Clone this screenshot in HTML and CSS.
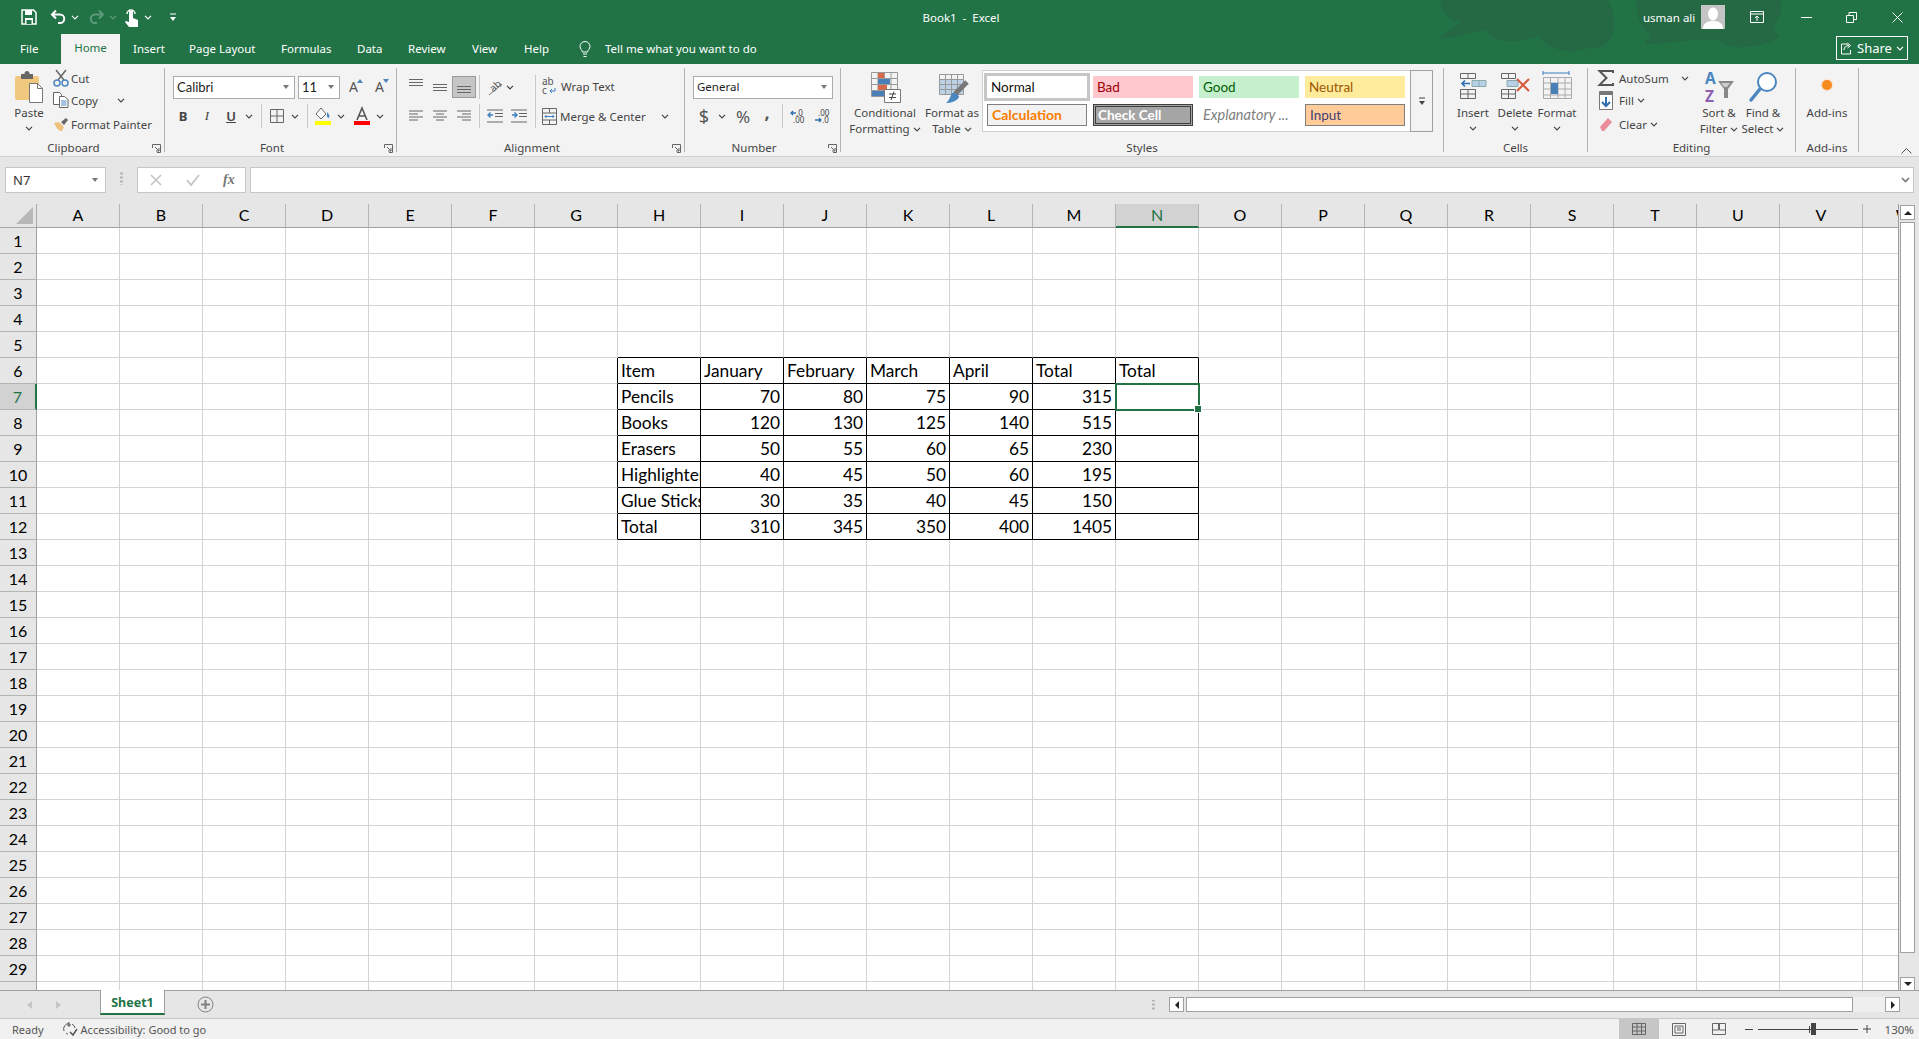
FILE: index.html
```html
<!DOCTYPE html>
<html lang="en">
<head>
    <meta charset="UTF-8">
    <meta name="viewport" content="width=device-width, initial-scale=1.0">
    <title>Book1 - Excel</title>
    <link rel="stylesheet" href="styles.css">
</head>
<body>
    <svg class="symbols">
        <symbol id="chev" viewBox="0 0 8 5"><path d="M1 .8l3 3 3-3" fill="none" stroke="#444" stroke-width="1.2"/></symbol>
        <symbol id="chev-w" viewBox="0 0 8 5"><path d="M1 .8l3 3 3-3" fill="none" stroke="#fff" stroke-width="1.2"/></symbol>
        <symbol id="launcher" viewBox="0 0 9 9"><path d="M.5 4V.5H8.500V8.500H5M3 3l4 4M7 4v3H4" fill="none" stroke="#666"/></symbol>
    </svg>

    <header class="titlebar">
        <svg class="title-art" width="400" height="64" viewBox="0 0 400 64">
            <path d="M2 0c2 14 10 20 20 22-6 6-18 12-20 16 18 0 30-6 44-8 14 16 38 12 54 6 8 12 30 20 50 12 16 2 26-8 26-22 0-10-2-20-6-26zM198 0c2 24 6 30 16 34-8 6-8 10-4 10 22 0 46-6 70-4 16 12 46 8 62-4-6-6-8-12-2-18 4-6 4-12 2-18z" fill="#246844"/>
        </svg>
        <div class="qat">
            <svg class="qat-save" width="16" height="16" viewBox="0 0 16 16"><path d="M1 1h11.500L15 3.500V15H1z" fill="none" stroke="#fff" stroke-width="1.500"/><path d="M4 1h7v5H4zM4 9h8v6H4z" fill="#fff"/><path d="M5.500 11h5v4h-5z" fill="#217346"/></svg>
            <svg class="qat-undo" width="17" height="16" viewBox="0 0 17 16"><path d="M6 1.500L2 5.500l4 4M2 5.500h8a4.200 4.200 0 0 1 0 8.500H8" fill="none" stroke="#fff" stroke-width="2"/></svg>
            <svg class="qat-chev" width="8" height="5"><use href="#chev-w"/></svg>
            <svg class="qat-redo" width="17" height="16" viewBox="0 0 17 16"><path d="M11 1.500l4 4-4 4M15 5.500H7a4.200 4.200 0 0 0 0 8.500h2" fill="none" stroke="#5c9a7c" stroke-width="2"/></svg>
            <svg class="qat-chev dim" width="8" height="5"><use href="#chev-w"/></svg>
            <svg class="qat-touch" width="16" height="20" viewBox="0 0 16 20"><path d="M3 7a4 4 0 1 1 8 0" fill="none" stroke="#fff" stroke-width="1.500"/><path d="M5 4h4v7l5 2v7H5l-4-5 1-1 3 1z" fill="#fff"/></svg>
            <svg class="qat-chev" width="8" height="5"><use href="#chev-w"/></svg>
            <svg class="qat-more" width="8" height="9" viewBox="0 0 8 9"><path d="M1 1h6" stroke="#fff"/><path d="M1 4h6L4 8z" fill="#fff"/></svg>
        </div>
        <div class="doc-title">Book1&nbsp; -&nbsp; Excel</div>
        <div class="window-area">
            <span class="user-name">usman ali</span>
            <svg class="avatar" width="24" height="24" viewBox="0 0 24 24"><path d="M0 0h24v24H0z" fill="#c4c4c4"/><ellipse cx="12" cy="9" rx="5" ry="6.500" fill="#fff"/><path d="M2 24c0-6 4-7 7-8h6c3 1 7 2 7 8z" fill="#fff"/></svg>
            <svg class="win-display" width="14" height="12" viewBox="0 0 14 12"><path d="M.5.500h13v11H.5zM.5 3h13M7 10V5M5 7l2-2 2 2" fill="none" stroke="#fff"/></svg>
            <svg class="win-min" width="11" height="1"><path d="M0 .5h11" stroke="#fff"/></svg>
            <svg class="win-restore" width="11" height="11" viewBox="0 0 11 11"><path d="M.5 3.500h7v7h-7zM3 3.500V.5h7.500v7H7.500" fill="none" stroke="#fff"/></svg>
            <svg class="win-close" width="11" height="11" viewBox="0 0 11 11"><path d="M.5.500l10 10M10.500.500l-10 10" stroke="#fff"/></svg>
        </div>
    </header>

    <nav class="tabs">
        <span class="tab tab-file">File</span>
        <span class="tab tab-home">Home</span>
        <span class="tab tab-insert">Insert</span>
        <span class="tab tab-layout">Page Layout</span>
        <span class="tab tab-formulas">Formulas</span>
        <span class="tab tab-data">Data</span>
        <span class="tab tab-review">Review</span>
        <span class="tab tab-view">View</span>
        <span class="tab tab-help">Help</span>
        <svg class="bulb" width="12" height="17" viewBox="0 0 12 17"><path d="M3.500 11C3 8.500 1 8 1 5.500a5 5 0 0 1 10 0C11 8 9 8.500 8.500 11zM4 13h4M4.500 15.500h3" fill="none" stroke="#fff"/></svg>
        <span class="tell-me">Tell me what you want to do</span>
        <span class="share">
            <svg width="13" height="13" viewBox="0 0 13 13"><path d="M8 2H1.500v10h9V8M4 8c0-3 2-4.500 5-4.500M7.500 1l3 2.500-3 2.500" fill="none" stroke="#fff"/></svg>
            Share
            <svg width="8" height="5"><use href="#chev-w"/></svg>
        </span>
    </nav>

    <section class="ribbon">
        <div class="group group-clipboard has-launcher">
            <div class="group-body">
                <div class="big-btn paste-btn">
                    <svg class="big-icon" width="32" height="34" viewBox="0 0 32 34"><rect x="2" y="6" width="24" height="24" rx="2" fill="#f0c97e"/><rect x="8" y="4" width="12" height="5" fill="#666"/><circle cx="14" cy="3.500" r="2.500" fill="#666"/><path d="M16.500 13.500h8l5 5v14h-13z" fill="#fff" stroke="#777"/><path d="M24.500 13.500v5h5" fill="none" stroke="#777"/></svg>
                    <span>Paste</span>
                    <svg class="chev-line" width="8" height="5"><use href="#chev"/></svg>
                </div>
                <div class="stack">
                    <div class="stack-row">
                        <svg class="stack-icon" width="16" height="18" viewBox="0 0 16 18"><path d="M3 1l8 10M13 1L5 11" stroke="#666" stroke-width="1.500"/><circle cx="4" cy="14" r="3" fill="none" stroke="#4a86c0" stroke-width="1.500"/><circle cx="12" cy="14" r="3" fill="none" stroke="#4a86c0" stroke-width="1.500"/></svg>
                        <span>Cut</span>
                    </div>
                    <div class="stack-row">
                        <svg class="stack-icon" width="16" height="16" viewBox="0 0 16 16"><path d="M.5.500h6l2 2v10H.5z" fill="#fff" stroke="#666"/><path d="M6.500 4.500h5l3.500 3v8H6.500z" fill="#fff" stroke="#666"/><path d="M8 9h5.500M8 11h5.500M8 13h5.500" stroke="#4a86c0"/></svg>
                        <span>Copy</span>
                        <svg class="copy-chev" width="8" height="5"><use href="#chev"/></svg>
                    </div>
                    <div class="stack-row">
                        <svg class="stack-icon" width="16" height="15" viewBox="0 0 16 15"><path d="M1 6l5-1 5 5-2 4c-3 1-6-4-8-8z" fill="#eec27c"/><path d="M8 5l5-4 2 2-4 5z" fill="#666"/></svg>
                        <span>Format Painter</span>
                    </div>
                </div>
            </div>
            <div class="group-label">Clipboard</div>
            <svg class="launcher" width="9" height="9"><use href="#launcher"/></svg>
        </div>

        <div class="group group-font has-launcher">
            <div class="tool-rows">
                <div class="tool-row">
                    <div class="combo combo-font"><span>Calibri</span><i class="caret"></i></div>
                    <div class="combo combo-size"><span>11</span><i class="caret"></i></div>
                    <span class="tool tool-grow">A<svg width="6" height="4"><path d="M0 4l3-4 3 4z" fill="#4a86c0"/></svg></span>
                    <span class="tool tool-shrink">A<svg width="6" height="4"><path d="M0 0l3 4 3-4z" fill="#4a86c0"/></svg></span>
                </div>
                <div class="tool-row">
                    <span class="tool letter-b">B</span>
                    <span class="tool letter-i">I</span>
                    <span class="tool letter-u">U</span>
                    <svg class="chev" width="8" height="5"><use href="#chev"/></svg>
                    <i class="vsep"></i>
                    <span class="tool"><svg width="14" height="14" viewBox="0 0 14 14"><path d="M.5.500h13v13H.5zM7 .5v13M.5 7h13" fill="none" stroke="#666"/></svg></span>
                    <svg class="chev" width="8" height="5"><use href="#chev"/></svg>
                    <i class="vsep"></i>
                    <span class="tool"><svg width="16" height="18" viewBox="0 0 16 18"><path d="M6 1L1 7l5 5 5-5z" fill="#fff" stroke="#666"/><path d="M12 5c2 2 3 4 2 6l-2-1z" fill="#4a86c0"/><path d="M0 14h16v4H0z" fill="#ffff00"/></svg></span>
                    <svg class="chev" width="8" height="5"><use href="#chev"/></svg>
                    <span class="tool tool-color"><svg width="16" height="18" viewBox="0 0 16 18"><path d="M3 13L8 1l5 12M5 9h6" fill="none" stroke="#555" stroke-width="1.600"/><path d="M0 14h16v4H0z" fill="#ff0000"/></svg></span>
                    <svg class="chev" width="8" height="5"><use href="#chev"/></svg>
                </div>
            </div>
            <div class="group-label">Font</div>
            <svg class="launcher" width="9" height="9"><use href="#launcher"/></svg>
        </div>

        <div class="group group-align has-launcher">
            <div class="align-body">
                <div class="tool-rows">
                    <div class="tool-row">
                        <span class="tool va-top"><svg width="14" height="7" viewBox="0 0 14 7"><path d="M0 .5h14M0 3.500h14M0 6.500h14" stroke="#666"/></svg></span>
                        <span class="tool va-mid"><svg width="14" height="7" viewBox="0 0 14 7"><path d="M0 .5h14M0 3.500h14M0 6.500h14" stroke="#666"/></svg></span>
                        <span class="tool tool-on va-bot"><svg width="14" height="7" viewBox="0 0 14 7"><path d="M0 .5h14M0 3.500h14M0 6.500h14" stroke="#666"/></svg></span>
                        <i class="vsep vsep-tight"></i>
                        <span class="tool"><svg width="17" height="17" viewBox="0 0 17 17"><text x="3" y="11" transform="rotate(-42 8 8)" class="svg-label">ab</text><path d="M2 16L15 5" stroke="#777"/><path d="M15 5l-3 .5 2 2.500z" fill="#777"/></svg></span>
                        <svg class="chev chev-pull" width="8" height="5"><use href="#chev"/></svg>
                    </div>
                    <div class="tool-row">
                        <span class="tool"><svg width="14" height="12" viewBox="0 0 14 12"><path d="M0 1h14M0 4h9M0 7h14M0 10h9" stroke="#666"/></svg></span>
                        <span class="tool"><svg width="14" height="12" viewBox="0 0 14 12"><path d="M0 1h14M3 4h8M0 7h14M3 10h8" stroke="#666"/></svg></span>
                        <span class="tool"><svg width="14" height="12" viewBox="0 0 14 12"><path d="M0 1h14M5 4h9M0 7h14M5 10h9" stroke="#666"/></svg></span>
                        <i class="vsep vsep-tight"></i>
                        <span class="tool"><svg width="16" height="14" viewBox="0 0 16 14"><path d="M0 1h16M8 4.500h8M8 7.500h8M0 13h16" stroke="#666"/><path d="M6 6H1M3.500 3.500L1 6l2.500 2.500" fill="none" stroke="#3f7fbf" stroke-width="1.400"/></svg></span>
                        <span class="tool"><svg width="16" height="14" viewBox="0 0 16 14"><path d="M0 1h16M8 4.500h8M8 7.500h8M0 13h16" stroke="#666"/><path d="M1 6h5M3.500 3.500L6 6 3.500 8.500" fill="none" stroke="#3f7fbf" stroke-width="1.400"/></svg></span>
                    </div>
                </div>
                <i class="vsep-tall"></i>
                <div class="wrap-col">
                    <div class="wrap-row">
                        <svg width="16" height="18" viewBox="0 0 16 18"><text x="0" y="8" class="svg-label">ab</text><text x="0" y="17" class="svg-label">c</text><path d="M13 11v3H8M10 12l-2 2 2 2" fill="none" stroke="#3f7fbf"/></svg>
                        <span>Wrap Text</span>
                    </div>
                    <div class="wrap-row">
                        <svg width="15" height="17" viewBox="0 0 15 17"><path d="M.5.500h14v16H.5zM.5 5h14M.5 12h14M7.500.500V5M7.500 12v4.500" fill="none" stroke="#666"/><path d="M3 8.500h9M4.500 7L3 8.500 4.500 10M10.500 7L12 8.500 10.500 10" fill="none" stroke="#3f7fbf"/></svg>
                        <span>Merge &amp; Center</span>
                        <svg class="merge-chev" width="8" height="5"><use href="#chev"/></svg>
                    </div>
                </div>
            </div>
            <div class="group-label">Alignment</div>
            <svg class="launcher" width="9" height="9"><use href="#launcher"/></svg>
        </div>

        <div class="group group-number has-launcher">
            <div class="tool-rows">
                <div class="tool-row">
                    <div class="combo combo-format"><span>General</span><i class="caret"></i></div>
                </div>
                <div class="tool-row">
                    <span class="tool letter-sym">$</span>
                    <svg class="chev" width="8" height="5"><use href="#chev"/></svg>
                    <span class="tool letter-sym tool-pct">%</span>
                    <span class="tool letter-comma">,</span>
                    <i class="vsep vsep-tight"></i>
                    <span class="tool"><svg width="16" height="15" viewBox="0 0 16 15"><text x="6" y="6.500" class="svg-digits">.0</text><text x="3" y="14" class="svg-digits">.00</text><path d="M6 4H1M3 2L1 4l2 2" fill="none" stroke="#2f6fae" stroke-width="1.300"/></svg></span>
                    <span class="tool"><svg width="16" height="15" viewBox="0 0 16 15"><text x="4" y="6.500" class="svg-digits">.00</text><text x="8" y="14" class="svg-digits">.0</text><path d="M1 11h6M5 9l2 2-2 2" fill="none" stroke="#2f6fae" stroke-width="1.300"/></svg></span>
                </div>
            </div>
            <div class="group-label">Number</div>
            <svg class="launcher" width="9" height="9"><use href="#launcher"/></svg>
        </div>

        <div class="group group-styles">
            <div class="group-body">
                <div class="big-btn cf-btn">
                    <svg class="big-icon" width="34" height="34" viewBox="0 0 34 34"><path d="M3.500 2.500h26v24h-26zM3.500 8.500h26M3.500 14.500h26M3.500 20.500h26M10 2.500v24M16.500 2.500v24M23 2.500v24" fill="none" stroke="#999"/><path d="M10 3h6v5h-6zM10 15h9v5h-9z" fill="#d8694a"/><path d="M10 9h12v5H10zM4 21h12v5H4z" fill="#4a7fb8"/><path d="M16.500 19.500h16v13h-16z" fill="#fff" stroke="#777"/><path d="M21 24h7M21 27.500h7M26 21.500l-3 8.500" fill="none" stroke="#444"/></svg>
                    <span>Conditional</span>
                    <span>Formatting <svg width="8" height="5"><use href="#chev"/></svg></span>
                </div>
                <div class="big-btn ft-btn">
                    <svg class="big-icon" width="34" height="34" viewBox="0 0 34 34"><path d="M4 9h24v15H4z" fill="#bcd0e6"/><path d="M4.500 4.500h24v20h-24zM4.500 9.500h24M4.500 14.500h24M4.500 19.500h24M10.500 4.500v20M16.500 4.500v20M22.500 4.500v20" fill="none" stroke="#999"/><path d="M32 12L20 24" stroke="#777" stroke-width="5"/><path d="M17 23c4 0 7 2 7 4-2 4-8 6-13 6 3-2 4-6 6-10z" fill="#4a86c0"/></svg>
                    <span>Format as</span>
                    <span>Table <svg width="8" height="5"><use href="#chev"/></svg></span>
                </div>
                <div class="gallery">
                    <div class="gallery-cells">
                        <div class="style style-normal">Normal</div>
                        <div class="style style-bad">Bad</div>
                        <div class="style style-good">Good</div>
                        <div class="style style-neutral">Neutral</div>
                        <div class="style style-calc">Calculation</div>
                        <div class="style style-check">Check Cell</div>
                        <div class="style style-expl">Explanatory ...</div>
                        <div class="style style-input">Input</div>
                    </div>
                    <div class="gallery-more"><svg width="8" height="9" viewBox="0 0 8 9"><path d="M1 1h6" stroke="#444"/><path d="M1 4h6L4 8z" fill="#444"/></svg></div>
                </div>
            </div>
            <div class="group-label">Styles</div>
        </div>

        <div class="group group-cells">
            <div class="group-body">
                <div class="big-btn cell-btn">
                    <svg class="big-icon" width="34" height="34" viewBox="0 0 34 34"><path d="M4.500 3.500h15v5h-15zM12 3.500v5M4.500 19.500h15v9h-15zM4.500 24h15M12 19.500v9" fill="none" stroke="#666"/><path d="M16 10.500h14v6H16z" fill="#b8cfe6" stroke="#8aa"/><path d="M23 10.500v6" stroke="#8aa"/><path d="M14 13.500H6M9 10.500l-3 3 3 3" fill="none" stroke="#2f6fae" stroke-width="1.600"/></svg>
                    <span>Insert</span>
                    <svg class="chev-line" width="8" height="5"><use href="#chev"/></svg>
                </div>
                <div class="big-btn cell-btn">
                    <svg class="big-icon" width="34" height="34" viewBox="0 0 34 34"><path d="M3.500 3.500h14v5h-14zM10.500 3.500v5M3.500 19.500h14v9h-14zM3.500 24h14M10.500 19.500v9" fill="none" stroke="#666"/><path d="M9 10.500h11v6H9z" fill="#b8cfe6" stroke="#8aa"/><path d="M19 9l12 12M31 9L19 21" stroke="#d8593a" stroke-width="2"/></svg>
                    <span>Delete</span>
                    <svg class="chev-line" width="8" height="5"><use href="#chev"/></svg>
                </div>
                <div class="big-btn cell-btn">
                    <svg class="big-icon" width="34" height="34" viewBox="0 0 34 34"><path d="M3 3h26M3 1v4M29 1v4" fill="none" stroke="#3f7fbf"/><path d="M3.500 7.500h28v21h-28zM3.500 13h28M3.500 19h28M3.500 25h28M10.500 7.500v21M18 7.500v21M25 7.500v21" fill="none" stroke="#aaa"/><path d="M11 13h7v11h-7z" fill="#4a7fb8"/></svg>
                    <span>Format</span>
                    <svg class="chev-line" width="8" height="5"><use href="#chev"/></svg>
                </div>
            </div>
            <div class="group-label">Cells</div>
        </div>

        <div class="group group-editing">
            <div class="group-body">
                <div class="stack stack-edit">
                    <div class="stack-row">
                        <svg class="edit-icon" width="16" height="16" viewBox="0 0 16 16"><path d="M15 3V1H1.500l7 7-7 7H15v-2" fill="none" stroke="#555" stroke-width="2"/></svg>
                        <span>AutoSum</span>
                        <svg class="autosum-chev" width="8" height="5"><use href="#chev"/></svg>
                    </div>
                    <div class="stack-row">
                        <svg class="edit-icon" width="14" height="19" viewBox="0 0 14 19"><path d="M.5.500h13v18H.5z" fill="#fff" stroke="#777"/><path d="M1 1h12v3H1z" fill="#777"/><path d="M7 6v9M3 11l4 4 4-4" fill="none" stroke="#2f6fae" stroke-width="2"/></svg>
                        <span>Fill <svg width="8" height="5"><use href="#chev"/></svg></span>
                    </div>
                    <div class="stack-row">
                        <svg class="edit-icon" width="14" height="15" viewBox="0 0 14 15"><path d="M1 10l8-9 4 4-8 9H3z" fill="#ea8c9a"/></svg>
                        <span>Clear <svg width="8" height="5"><use href="#chev"/></svg></span>
                    </div>
                </div>
                <div class="big-btn sort-btn">
                    <svg class="big-icon" width="34" height="34" viewBox="0 0 34 34"><text x="3" y="14" class="svg-sort sort-a">A</text><text x="3" y="32" class="svg-sort sort-z">Z</text><path d="M16 11h16l-6 8v9h-4v-9z" fill="#888"/><path d="M19 13h9l-3 4h-3z" fill="#ccc"/></svg>
                    <span>Sort &amp;</span>
                    <span>Filter <svg width="8" height="5"><use href="#chev"/></svg></span>
                </div>
                <div class="big-btn sort-btn">
                    <svg class="big-icon" width="34" height="34" viewBox="0 0 34 34"><circle cx="21" cy="12" r="9" fill="#fff" stroke="#4a86c0" stroke-width="2"/><path d="M14 19L5 30" stroke="#4a86c0" stroke-width="3.500" stroke-linecap="round"/></svg>
                    <span>Find &amp;</span>
                    <span>Select <svg width="8" height="5"><use href="#chev"/></svg></span>
                </div>
            </div>
            <div class="group-label">Editing</div>
        </div>

        <div class="group group-addins">
            <div class="group-body">
                <div class="big-btn addin-btn">
                    <i class="addin-dot"></i>
                    <span>Add-ins</span>
                </div>
            </div>
            <div class="group-label">Add-ins</div>
        </div>
        <svg class="collapse" width="11" height="6" viewBox="0 0 11 6"><path d="M.5 5.500l5-5 5 5" fill="none" stroke="#555"/></svg>
    </section>

    <section class="formula-band">
        <div class="name-box"><span>N7</span><i class="caret"></i></div>
        <div class="grip"></div>
        <div class="fx-box">
            <svg width="12" height="12" viewBox="0 0 12 12"><path d="M1 1l10 10M11 1L1 11" stroke="#c4c4c4" stroke-width="1.600"/></svg>
            <svg width="14" height="12" viewBox="0 0 14 12"><path d="M1 6l4 5 8-10" fill="none" stroke="#c4c4c4" stroke-width="1.800"/></svg>
            <span class="fx">fx</span>
        </div>
        <div class="formula-input"><svg width="9" height="6" viewBox="0 0 9 6"><path d="M1 1l3.500 3.500L8 1" fill="none" stroke="#777" stroke-width="1.600"/></svg></div>
    </section>

    <section class="workspace">
        <div class="sheet-view">
            <div class="sheet" id="sheet"></div>
        </div>
        <div class="vscroll">
            <span class="scroll-btn"><i class="tri-up"></i></span>
            <span class="vthumb"></span>
            <span class="scroll-btn"><i class="tri-down"></i></span>
        </div>
    </section>

    <section class="tabbar">
        <svg class="nav-arrow" width="5" height="8"><path d="M5 0L0 4l5 4z" fill="#c4c4c4"/></svg>
        <svg class="nav-arrow nav-next" width="5" height="8"><path d="M0 0l5 4-5 4z" fill="#c4c4c4"/></svg>
        <div class="sheet-tab">Sheet1</div>
        <svg class="add-sheet" width="17" height="17" viewBox="0 0 17 17"><circle cx="8.500" cy="8.500" r="7.500" fill="none" stroke="#808080"/><path d="M8.500 4v9M4 8.500h9" stroke="#808080" stroke-width="2"/></svg>
        <div class="grip grip-tabs"></div>
        <div class="hscroll">
            <span class="scroll-btn"><i class="tri-left"></i></span>
            <span class="hthumb"></span>
            <span class="hrest"></span>
            <span class="scroll-btn"><i class="tri-right"></i></span>
        </div>
    </section>

    <footer class="statusbar">
        <span class="status-ready">Ready</span>
        <svg class="a11y" width="16" height="15" viewBox="0 0 16 15"><path d="M7 1.500A5.500 5.500 0 0 0 2 9M13 6a5.500 5.500 0 0 0-3-4M4 11a5 5 0 0 0 2 1.300" fill="none" stroke="#555"/><path d="M7 0v5M5 3h4" stroke="#555"/><path d="M8 10l3 3 4-6" fill="none" stroke="#555" stroke-width="1.500"/></svg>
        <span class="status-a11y">Accessibility: Good to go</span>
        <div class="view-btn view-on"><svg width="14" height="12" viewBox="0 0 14 12"><path d="M.5.500h13v11H.5zM.5 4h13M.5 8h13M5 .5v11M9.500.500v11" fill="none" stroke="#666"/></svg></div>
        <div class="view-btn"><svg width="14" height="13" viewBox="0 0 14 13"><path d="M.5.500h13v12H.5zM3 3h8v7H3zM5 5h4M5 7h4" fill="none" stroke="#666"/></svg></div>
        <div class="view-btn"><svg width="14" height="12" viewBox="0 0 14 12"><path d="M.5.500h13v11H.5zM.5 7h6V.5M7.500.500V7h6" fill="none" stroke="#666"/></svg></div>
        <div class="zoom-bar">
            <i class="zoom-minus"></i>
            <div class="zoom-track"><i class="zoom-tick"></i><i class="zoom-thumb"></i></div>
            <svg class="zoom-plus" width="8" height="8"><path d="M0 4h8M4 0v8" stroke="#444"/></svg>
            <span class="zoom-value">130%</span>
        </div>
    </footer>

    <script src="sheet.js"></script>
</body>
</html>
```

FILE: styles.css
```css
* {
    box-sizing: border-box;
}

body {
    margin: 0;
    width: 1919px;
    height: 1039px;
    overflow: hidden;
    display: flex;
    flex-direction: column;
    background-color: #e6e6e6;
    color: #444;
    font-family: "Noto Sans", sans-serif;
    font-size: 11.5px;
}

svg {
    display: block;
    flex-shrink: 0;
    overflow: visible;
}

i {
    display: block;
    font-style: normal;
}

.symbols {
    position: absolute;
    width: 0;
    height: 0;
}

/* Title bar */
.titlebar {
    position: relative;
    height: 34px;
    flex-shrink: 0;
    display: flex;
    align-items: center;
    background-color: #217346;
    color: #fff;
}

.title-art {
    position: absolute;
    top: 0;
    left: 1438px;
}

.qat {
    position: relative;
    width: 500px;
    display: flex;
    align-items: center;
    padding-left: 21px;
}

.qat-undo { margin-left: 13px; }
.qat-chev { margin-left: 4px; }
.qat-chev.dim { opacity: 0.3; }
.qat-redo { margin-left: 9px; }
.qat-touch { margin-left: 7px; }
.qat-more { margin-left: 17px; }

.doc-title {
    position: relative;
    width: 922px;
    text-align: center;
}

.window-area {
    position: relative;
    flex: 1;
    display: flex;
    align-items: center;
    margin-left: -222px;
}

.user-name { margin-left: 443px; }
.avatar { margin-left: 6px; }
.win-display { margin-left: 25px; }
.win-min { margin-left: 37px; }
.win-restore { margin-left: 34px; }
.win-close { margin-left: 35px; }

/* Tabs */
.tabs {
    height: 30px;
    flex-shrink: 0;
    display: flex;
    align-items: center;
    background-color: #217346;
    color: #fff;
}

.tab {
    flex-shrink: 0;
    margin-top: -2px;
}

.tab-file { width: 61px; padding-left: 20px; }
.tab-home {
    width: 59px;
    height: 30px;
    margin-top: 0;
    line-height: 28px;
    text-align: center;
    background-color: #f3f3f3;
    color: #217346;
}
.tab-insert { width: 56px; margin-left: 13px; }
.tab-layout { width: 92px; }
.tab-formulas { width: 76px; }
.tab-data { width: 51px; }
.tab-review { width: 64px; }
.tab-view { width: 52px; }
.tab-help { width: 55px; }
.tell-me { margin-left: 14px; margin-top: -2px; }

.share {
    display: flex;
    align-items: center;
    justify-content: center;
    gap: 4px;
    width: 72px;
    height: 24px;
    margin-left: auto;
    margin-right: 11px;
    margin-top: -2px;
    border: 1px solid #fff;
    font-size: 13px;
}

/* Ribbon */
.ribbon {
    position: relative;
    height: 93px;
    flex-shrink: 0;
    display: flex;
    padding-top: 4px;
    background-color: #f3f3f3;
    border-bottom: 1px solid #d0d0d0;
}

.group {
    position: relative;
    height: 84px;
    flex-shrink: 0;
    border-right: 1px solid #b4b4b4;
}

.group-clipboard { width: 165px; }
.group-font { width: 232px; }
.group-align { width: 288px; }
.group-number { width: 156px; }
.group-styles { width: 603px; }
.group-cells { width: 144px; }
.group-editing { width: 208px; }
.group-addins { width: 63px; }

.group-body {
    height: 72px;
    display: flex;
}

.group-label {
    height: 16px;
    line-height: 16px;
    text-align: center;
}

.has-launcher .group-label { padding-right: 17px; }

.launcher {
    position: absolute;
    right: 3px;
    bottom: -1px;
}

/* Large button: icon above one or two lines of text */
.big-btn {
    display: flex;
    flex-direction: column;
    align-items: center;
    flex-shrink: 0;
    padding-top: 2px;
    line-height: 16px;
    white-space: nowrap;
}

.big-btn span {
    display: flex;
    align-items: center;
    gap: 3px;
}

.big-icon { margin-bottom: 1px; }
.chev-line { margin-top: 5px; }

.paste-btn { width: 42px; margin-left: 8px; }
.cf-btn { width: 68px; margin-left: 10px; }
.ft-btn { width: 60px; margin-left: 3px; }
.cell-btn { width: 42px; }
.group-cells .group-body { padding-left: 8px; }
.sort-btn { width: 44px; }
.addin-btn { width: 62px; }

.addin-dot {
    width: 10px;
    height: 10px;
    margin: 10px 0 15px;
    border-radius: 50%;
    background-color: #f58a1f;
    box-shadow: 0 0 2px #f9b46c;
}

/* Stacked small buttons */
.stack {
    display: flex;
    flex-direction: column;
    width: 112px;
    margin-left: 2px;
}

.stack-row {
    display: flex;
    align-items: center;
    height: 24px;
    white-space: nowrap;
}

.stack-row:first-child { height: 20px; }

.stack-row span {
    display: flex;
    align-items: center;
    gap: 3px;
}

.stack-icon { width: 16px; margin: 0 2px 0 1px; }
.copy-chev { margin-left: 19px; }

.stack-edit {
    width: 101px;
    margin-left: 8px;
}

.edit-icon { margin: 0 5px 0 2px; }
.stack-edit .stack-row:nth-child(2) .edit-icon { margin: 0 6px 0 3px; }
.stack-edit .stack-row:nth-child(3) .edit-icon { margin: 0 6px 0 3px; }
.autosum-chev { margin-left: 12px; }

/* Two rows of small tools */
.tool-rows {
    display: flex;
    flex-direction: column;
    gap: 7px;
    height: 72px;
    padding-top: 8px;
}

.tool-row {
    display: flex;
    align-items: center;
    height: 22px;
}

.tool {
    display: flex;
    align-items: center;
    justify-content: center;
    width: 24px;
    height: 22px;
    flex-shrink: 0;
}

.tool-on {
    background-color: #c6c6c6;
    border: 1px solid #999;
}

.va-top { align-items: flex-start; padding-top: 3px; }
.va-mid { padding-top: 1px; }
.va-bot { align-items: flex-end; padding-bottom: 4px; }

.chev { width: 12px; height: 5px; }
.chev-pull { margin-left: -3px; }

.vsep {
    width: 1px;
    height: 24px;
    margin: 0 3px 0 6px;
    flex-shrink: 0;
    background-color: #c8c8c8;
}

.vsep-tight { margin: 0 3px; }

.group-font .tool-rows { padding-left: 6px; }
.group-font .tool-row:first-child { padding-left: 2px; }
.group-number .tool-rows { padding-left: 7px; }
.group-number .tool-row:first-child { padding-left: 1px; }

.combo {
    display: flex;
    align-items: center;
    justify-content: space-between;
    height: 23px;
    padding: 0 5px 1px 3px;
    background-color: #fff;
    border: 1px solid #ababab;
    color: #222;
    font-family: Lato, sans-serif;
    font-size: 13px;
}

.combo-font { width: 122px; }
.combo-size { width: 42px; margin: 0 2px 0 3px; }
.combo-format { width: 140px; font-family: "Noto Sans", sans-serif; font-size: 11.5px; }

.caret {
    width: 0;
    height: 0;
    border-style: solid;
    border-width: 4px 3.500px 0;
    border-color: #777 transparent transparent;
}

.tool-grow, .tool-shrink {
    align-items: flex-start;
    gap: 0;
    font-size: 14px;
    line-height: 22px;
    margin-left: 2px;
    color: #555;
}

.tool-grow svg, .tool-shrink svg { margin: 3px 0 0 -1px; }

.letter-b { font-weight: 700; font-size: 13px; }
.letter-i { font-style: italic; font-size: 13px; font-family: "Liberation Serif", serif; }
.letter-u { text-decoration: underline; font-size: 13px; font-weight: 600; }
.letter-sym { font-size: 18px; color: #555; }
.tool-pct { margin-left: 3px; font-size: 17px; }
.letter-comma { font-size: 18px; font-weight: 700; line-height: 14px; padding-bottom: 8px; color: #555; }
.tool-color { margin-left: 3px; }

.svg-label { font-family: "Noto Sans", sans-serif; font-size: 10px; fill: #555; }
.svg-digits { font-family: "Noto Sans", sans-serif; font-size: 8px; fill: #444; }
.svg-sort { font-family: "Noto Sans", sans-serif; font-size: 15.500px; font-weight: 700; }
.sort-a { fill: #4a86c0; }
.sort-z { fill: #8e5fb0; }

/* Alignment group */
.align-body {
    display: flex;
    height: 72px;
}

.group-align .tool-rows {
    width: 138px;
    padding-left: 7px;
    flex-shrink: 0;
}

.vsep-tall {
    width: 1px;
    height: 53px;
    margin-top: 7px;
    background-color: #c8c8c8;
}

.wrap-col {
    display: flex;
    flex-direction: column;
    padding: 7px 0 0 6px;
    gap: 8px;
}

.wrap-row {
    display: flex;
    align-items: center;
    gap: 3px;
    height: 22px;
    white-space: nowrap;
}

.merge-chev { margin-left: 12px; }

/* Styles gallery */
.gallery {
    display: flex;
    height: 62px;
    margin-top: 2px;
    width: 451px;
    flex-shrink: 0;
}

.gallery-cells {
    flex: 1;
    display: grid;
    grid-template-columns: repeat(4, 100px);
    grid-auto-rows: 22px;
    gap: 6px;
    padding: 5px 0 0 4px;
    background-color: #fff;
    border: 1px solid #d0d0d0;
    border-right: none;
}

.gallery-more {
    display: flex;
    align-items: center;
    justify-content: center;
    width: 23px;
    border: 1px solid #a0a0a0;
    background-color: #f3f3f3;
}

.style {
    display: flex;
    align-items: center;
    padding: 0 0 1px 4px;
    font-family: Lato, sans-serif;
    font-size: 13.500px;
    white-space: nowrap;
}

.style-normal { outline: 3px solid #c6c6c6; color: #111; }
.style-bad { background-color: #ffc7ce; color: #9c0006; }
.style-good { background-color: #c6efce; color: #006100; }
.style-neutral { background-color: #ffeb9c; color: #9c5700; }
.style-calc { background-color: #f2f2f2; border: 1px solid #7f7f7f; color: #fa7d00; font-weight: 700; font-size: 14px; }
.style-check { background-color: #a5a5a5; border: 3px double #3f3f3f; color: #fff; font-weight: 700; padding-left: 2px; }
.style-expl { color: #7f7f7f; font-style: italic; font-size: 14.500px; }
.style-input { background-color: #ffcc99; border: 1px solid #7f7f7f; color: #3f3f76; }

.collapse {
    position: absolute;
    right: 7px;
    bottom: 2px;
}

/* Formula bar */
.formula-band {
    height: 47px;
    flex-shrink: 0;
    display: flex;
    padding: 10px 5px 11px;
    background-color: #e6e6e6;
}

.name-box, .fx-box, .formula-input {
    display: flex;
    align-items: center;
    height: 26px;
    background-color: #fff;
    border: 1px solid #c6c6c6;
}

.name-box {
    justify-content: space-between;
    width: 101px;
    padding: 0 7px;
    color: #333;
    font-size: 13px;
}

.grip {
    width: 31px;
    background-image: linear-gradient(#b4b4b4 50%, transparent 50%);
    background-size: 3px 4px;
    background-repeat: repeat-y;
    background-position: center;
    margin: 5px 0 8px;
}

.fx-box {
    width: 109px;
    padding-left: 12px;
    gap: 24px;
    margin-right: 4px;
}

.fx {
    margin-left: -1px;
    font-family: "Liberation Serif", serif;
    font-style: italic;
    font-weight: 700;
    font-size: 14px;
    color: #777;
}

.formula-input {
    flex: 1;
    justify-content: flex-end;
    padding-right: 3px;
}

/* Grid */
.workspace {
    height: 786px;
    flex-shrink: 0;
    display: flex;
}

.sheet-view {
    width: 1899px;
    overflow: hidden;
    background-color: #fff;
    border-right: 1px solid #9f9f9f;
}

.sheet {
    display: grid;
    grid-template-columns: 37px repeat(23, 83px);
    grid-template-rows: 24px;
    grid-auto-rows: 26px;
    font-family: Lato, sans-serif;
    font-size: 17.300px;
    color: #000;
}

.corner, .col-head, .row-head {
    background-color: #e6e6e6;
    font-size: 16px;
    display: flex;
    align-items: center;
    justify-content: center;
}

.corner {
    align-items: flex-end;
    justify-content: flex-end;
    padding: 0 3px 3px 0;
    border-right: 1px solid #a8a8a8;
    border-bottom: 1px solid #a8a8a8;
}

.corner::before {
    content: '';
    width: 17px;
    height: 17px;
    background-color: #b7b7b7;
    clip-path: polygon(100% 0, 100% 100%, 0 100%);
}

.col-head {
    padding-bottom: 2px;
    border-right: 1px solid #b4b4b4;
    border-bottom: 1px solid #a0a0a0;
}

.row-head {
    border-right: 1px solid #a0a0a0;
    border-bottom: 1px solid #b4b4b4;
}

.col-head.active {
    background-color: #d2d2d2;
    color: #217346;
    border-bottom: 2px solid #217346;
}

.row-head.active {
    background-color: #d2d2d2;
    color: #217346;
    border-right: 2px solid #217346;
}

.cell {
    position: relative;
    min-width: 0;
    overflow: hidden;
    padding: 0 3px;
    line-height: 26px;
    white-space: nowrap;
    border-right: 1px solid #d4d4d4;
    border-bottom: 1px solid #d4d4d4;
}

.cell.num { text-align: right; }
.cell.edge-right { border-right-color: #000; }
.cell.edge-bottom { border-bottom-color: #000; }

.cell.selected {
    z-index: 1;
    overflow: visible;
    outline: 2px solid #217346;
    outline-offset: -1px;
}

/* Fill handle */
.cell.selected::after {
    content: '';
    position: absolute;
    right: -4px;
    bottom: -4px;
    width: 6px;
    height: 6px;
    background-color: #217346;
    border: 1px solid #fff;
}

/* Scrollbars */
.vscroll {
    flex: 1;
    display: flex;
    flex-direction: column;
    align-items: center;
    padding: 1px 3px 0 0;
}

.scroll-btn {
    display: flex;
    align-items: center;
    justify-content: center;
    flex-shrink: 0;
    width: 15px;
    height: 15px;
    background-color: #fff;
    border: 1px solid #a0a0a0;
}

.vthumb {
    width: 15px;
    height: 731px;
    margin: 2px 0 24px;
    background-color: #fff;
    border: 1px solid #a0a0a0;
    flex-shrink: 0;
}

.vscroll .scroll-btn:last-child { height: 14px; }

.tri-up, .tri-down, .tri-left, .tri-right {
    width: 0;
    height: 0;
    border-style: solid;
}

.tri-up { border-width: 0 4.500px 4px; border-color: transparent transparent #222; }
.tri-down { border-width: 4px 4.500px 0; border-color: #222 transparent transparent; }
.tri-left { border-width: 4.500px 4px 4.500px 0; border-color: transparent #222 transparent transparent; }
.tri-right { border-width: 4.500px 0 4.500px 4px; border-color: transparent transparent transparent #222; }

/* Sheet tabs */
.tabbar {
    height: 29px;
    flex-shrink: 0;
    display: flex;
    align-items: flex-start;
    background-color: #e6e6e6;
    border-top: 1px solid #9f9f9f;
    border-bottom: 1px solid #c8c8c8;
}

.nav-arrow { margin: 10px 0 0 27px; }
.nav-next { margin-left: 24px; }

.sheet-tab {
    width: 65px;
    height: 25px;
    margin: -1px 0 0 39px;
    line-height: 26px;
    text-align: center;
    background-color: #fff;
    border-left: 1px solid #9f9f9f;
    border-right: 1px solid #9f9f9f;
    border-bottom: 2px solid #217346;
    color: #217346;
    font-weight: 700;
    font-size: 12.500px;
}

.add-sheet { margin: 5px 0 0 32px; }

.grip-tabs {
    width: 3px;
    height: 11px;
    margin: 9px 0 0 938px;
    background-position: left;
}

.hscroll {
    display: flex;
    margin: 6px 0 0 14px;
}

.hthumb {
    width: 667px;
    height: 15px;
    margin-left: 2px;
    background-color: #fff;
    border: 1px solid #a0a0a0;
}

.hrest {
    width: 32px;
    background-color: #efefef;
}

/* Status bar */
.statusbar {
    flex: 1;
    display: flex;
    align-items: center;
    background-color: #f1f1f1;
    color: #555;
    font-size: 11px;
}

.status-ready { margin-left: 12px; }
.a11y { margin-left: 18px; }
.status-a11y { margin-left: 3px; width: 1538px; flex-shrink: 0; }

.view-btn {
    display: flex;
    align-items: center;
    justify-content: center;
    width: 40px;
    height: 20px;
    flex-shrink: 0;
}

.view-on { background-color: #c6c6c6; }

.zoom-bar {
    display: flex;
    align-items: center;
    flex-shrink: 0;
}

.zoom-minus {
    width: 8px;
    height: 1px;
    margin-left: 6px;
    background-color: #444;
}

.zoom-track {
    position: relative;
    width: 100px;
    height: 1px;
    margin-left: 5px;
    background-color: #444;
}

.zoom-tick {
    position: absolute;
    left: 51px;
    top: -3px;
    width: 1px;
    height: 7px;
    background-color: #444;
}

.zoom-thumb {
    position: absolute;
    left: 53px;
    top: -6px;
    width: 5px;
    height: 12px;
    background-color: #444;
}

.zoom-plus { margin-left: 5px; }
.zoom-value { margin-left: 14px; color: #555; font-size: 11.500px; }
```

FILE: sheet.js
```js
const colNames = 'ABCDEFGHIJKLMNOPQRSTUVW'.split('');
const rowCount = 30;
const selected = { col: 13, row: 7 };

// Table starts at H6
const table = {
    col: 7,
    row: 6,
    rows: [
        ['Item', 'January', 'February', 'March', 'April', 'Total', 'Total'],
        ['Pencils', 70, 80, 75, 90, 315, ''],
        ['Books', 120, 130, 125, 140, 515, ''],
        ['Erasers', 50, 55, 60, 65, 230, ''],
        ['Highlighters', 40, 45, 50, 60, 195, ''],
        ['Glue Sticks', 30, 35, 40, 45, 150, ''],
        ['Total', 310, 345, 350, 400, 1405, '']
    ]
};

function makeDiv(className, text) {
    const div = document.createElement('div');
    div.className = className;
    if (text !== undefined) div.textContent = text;
    return div;
}

function buildCell(col, row) {
    const cell = makeDiv('cell');
    const r = row - table.row;
    const c = col - table.col;
    const rows = table.rows.length;
    const cols = table.rows[0].length;
    const inRows = r >= 0 && r < rows;
    const inCols = c >= 0 && c < cols;

    if (inRows && c >= -1 && c < cols) cell.classList.add('edge-right');
    if (inCols && r >= -1 && r < rows) cell.classList.add('edge-bottom');

    if (inRows && inCols) {
        const value = table.rows[r][c];
        cell.textContent = value;
        if (typeof value === 'number') cell.classList.add('num');
    }
    if (col === selected.col && row === selected.row) cell.classList.add('selected');
    return cell;
}

function buildSheet() {
    const sheet = document.getElementById('sheet');
    sheet.appendChild(makeDiv('corner'));
    colNames.forEach((name, col) => {
        const active = col === selected.col ? ' active' : '';
        sheet.appendChild(makeDiv('col-head' + active, name));
    });
    for (let row = 1; row <= rowCount; row++) {
        const active = row === selected.row ? ' active' : '';
        sheet.appendChild(makeDiv('row-head' + active, row));
        colNames.forEach((name, col) => sheet.appendChild(buildCell(col, row)));
    }
}

buildSheet();
```
